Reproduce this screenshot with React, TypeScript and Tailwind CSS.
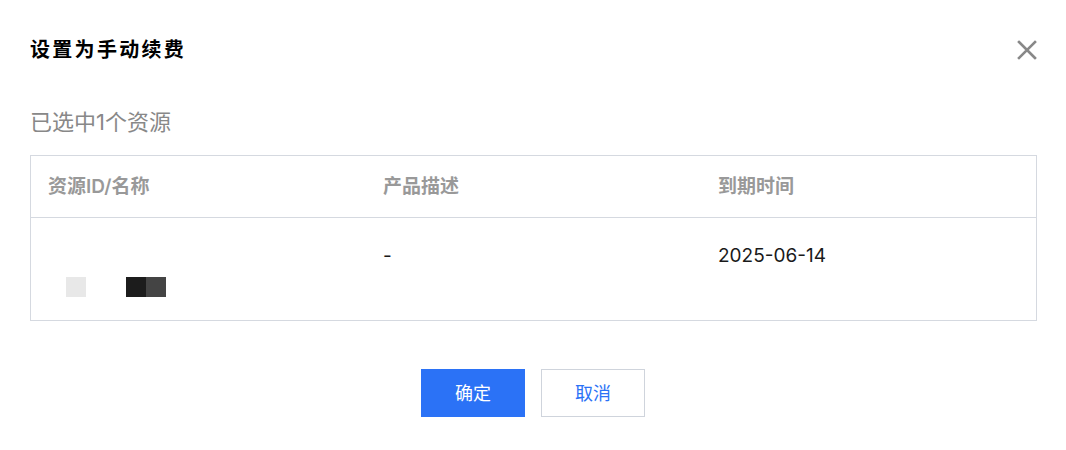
const font = { fontFamily: '"Inter", "Noto Sans CJK SC", sans-serif' };

function CloseIcon() {
  return (
    <svg width="20" height="20" viewBox="0 0 20 20">
      <path d="M2 2 L18 18 M18 2 L2 18" stroke="#888888" strokeWidth="2.6" strokeLinecap="square" />
    </svg>
  );
}

export default function App() {
  const columns = ['资源ID/名称', '产品描述', '到期时间'];

  return (
    <div className="w-full h-[450px] bg-white pl-[30px] pr-[29px] pt-[36px]" style={font}>
      {/* Header */}
      <div className="flex items-center justify-between h-[28px]">
        <h2 className="text-[20px] leading-[28px] font-bold text-black tracking-[2.3px]">设置为手动续费</h2>
        <CloseIcon />
      </div>

      <p className="mt-[44px] text-[22px] leading-[28px] text-[#888888]">已选中1个资源</p>

      {/* Table */}
      <div className="mt-[19px] border border-[#d5d9e0]">
        <div className="grid grid-cols-3 h-[62px] items-center border-b border-[#d5d9e0]">
          {columns.map((c) => (
            <div key={c} className="pl-[17px] pt-[2px] text-[19px] font-semibold text-[#999999]">
              {c}
            </div>
          ))}
        </div>
        <div className="grid grid-cols-3 h-[102px] pt-[25px] text-[19px] leading-[26px] text-[#1a1a1a]">
          <div className="pl-[17px]">
            <div className="h-[26px]" />
            <div className="mt-[8px] flex items-center pl-[18px]">
              <div className="w-[20px] h-[20px] bg-[#e8e8e8]" />
              <div className="ml-[40px] w-[20px] h-[20px] bg-[#1c1c1c]" />
              <div className="w-[20px] h-[20px] bg-[#444444]" />
            </div>
          </div>
          <div className="pl-[17px]">-</div>
          <div className="pl-[17px]">2025-06-14</div>
        </div>
      </div>

      {/* Footer */}
      <div className="mt-[48px] flex justify-center gap-[16px] pr-[1px]">
        <button className="w-[104px] h-[48px] bg-[#2b72f6] text-white text-[18px]">确定</button>
        <button className="w-[104px] h-[48px] bg-white border border-[#cfd4dc] text-[#2b72f6] text-[18px]">取消</button>
      </div>
    </div>
  );
}
